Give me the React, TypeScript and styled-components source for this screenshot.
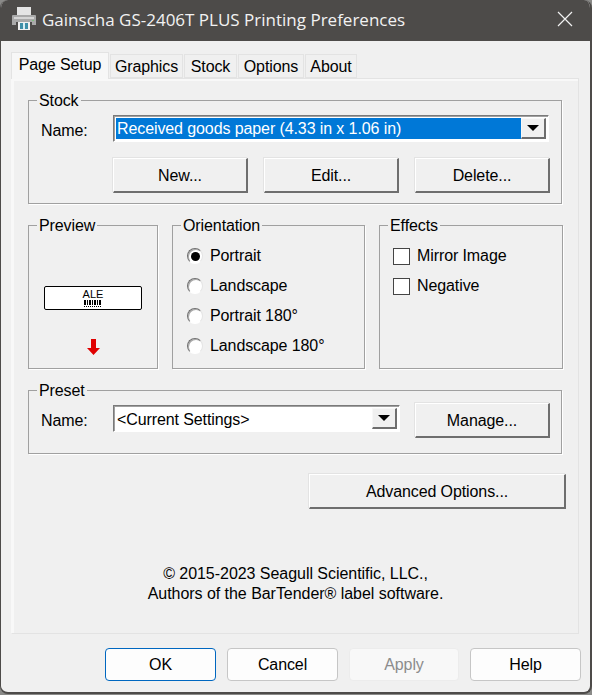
import React from 'react'
import styled, { createGlobalStyle } from 'styled-components'

const Global = createGlobalStyle`
  html, body {
    margin: 0;
    padding: 0;
    background: #8a8a88;
  }
  * {
    box-sizing: border-box;
  }
`
const Dialog = styled.div`
  width: 592px;
  height: 694px;
  display: flex;
  flex-direction: column;
  background: #f0f0f0;
  border-radius: 8px;
  overflow: hidden;
  border-style: solid;
  border-color: #4d4b49;
  border-width: 0 2px 2px 1px;
  font-family: "Liberation Sans", Arial, sans-serif;
  font-size: 16px;
  letter-spacing: -0.1px;
  color: #000;
`
const TitleBar = styled.div`
  height: 41px;
  flex-shrink: 0;
  display: flex;
  align-items: center;
  padding: 0 17px 0 11px;
  background: #4d4b49;
  color: #f2f2f2;
  letter-spacing: 0;
`
const Title = styled.div`
  flex: 1;
  margin: 0 0 3px 6px;
  font-family: "Open Sans", "Noto Sans", sans-serif;
  font-size: 17px;
  white-space: nowrap;
`
const PrinterIcon = styled.svg`
  display: block;
  margin-bottom: 5px;
`
const CloseIcon = styled.svg`
  display: block;
  margin-bottom: 4px;
`
const Body = styled.div`
  flex: 1;
  padding: 11px 11px 0 10px;
`
const TabRow = styled.div`
  display: flex;
  align-items: flex-end;
  height: 26px;
  position: relative;
  z-index: 1;
`
const Tab = styled.div<{ $active?: boolean; $w: number }>`
  width: ${p => p.$w}px;
  height: ${p => (p.$active ? 27 : 24)}px;
  margin-right: 1px;
  margin-bottom: ${p => (p.$active ? -1 : 0)}px;
  padding-top: 3px;
  text-align: center;
  background: ${p => (p.$active ? '#f7f7f7' : '#f0f0f0')};
  border: 1px solid #e3e3e3;
  border-bottom: ${p => (p.$active ? 0 : '1px solid #e3e3e3')};
  white-space: nowrap;
`
const TabPanel = styled.div`
  height: 556px;
  border: 1px solid #e3e3e3;
  border-left-color: #f8f8f8;
  padding: 21px 16px 0 16px;
  box-shadow: inset 2px 2px 0 #f8f8f8;
`
const Group = styled.div<{ $w?: number; $h: number }>`
  position: relative;
  height: ${p => p.$h}px;
  width: ${p => (p.$w ? `${p.$w}px` : 'auto')};
  flex-shrink: 0;
  outline: 1px solid #a0a0a0;
  outline-offset: -1px;
  box-shadow: 1px 1px 0 #fff;
`
const Legend = styled.div`
  position: absolute;
  top: -8px;
  left: 9px;
  padding: 0 2px;
  line-height: 18px;
  background: #f0f0f0;
`
const NameRow = styled.div`
  display: flex;
  align-items: flex-start;
  padding-left: 13px;
`
const NameLabel = styled.div`
  width: 72px;
  padding-top: 7px;
`
const Combo = styled.div<{ $w: number }>`
  width: ${p => p.$w}px;
  height: 27px;
  display: flex;
  padding: 2px;
  background: #fff;
  border: 1px solid;
  border-color: #7a7a7a #fff #fff #7a7a7a;
  box-shadow: inset 1px 1px 0 #a0a0a0;
`
const ComboValue = styled.div<{ $selected?: boolean }>`
  flex: 1;
  padding: ${p => (p.$selected ? '0 0 0 1px' : '1px 0 0 1px')};
  line-height: 21px;
  white-space: nowrap;
  background: ${p => (p.$selected ? '#0078d7' : '#fff')};
  color: ${p => (p.$selected ? '#fff' : '#000')};
`
const ComboArrow = styled.div`
  width: 25px;
  display: flex;
  align-items: center;
  justify-content: center;
  background: #f0f0f0;
  border-style: solid;
  border-width: 1px 2px 2px 1px;
  border-color: #f8f8f8 #6e6e6e #6e6e6e #f8f8f8;
  &::after {
    content: '';
    border-style: solid;
    border-width: 6px 6px 0;
    border-color: #000 transparent transparent;
  }
`
const ClassicButton = styled.div<{ $w?: number }>`
  width: ${p => p.$w ?? 135}px;
  height: 35px;
  display: flex;
  align-items: center;
  justify-content: center;
  padding-top: 1px;
  background: #f0f0f0;
  border-style: solid;
  border-color: #fff #6e6e6e #6e6e6e #fff;
  border-width: 1px 2px 2px 1px;
  box-shadow: -1px -1px 0 #e3e3e3;
`
const ButtonRow = styled.div`
  display: flex;
  gap: 16px;
  margin: 16px 0 0 85px;
`
const StockBody = styled.div`
  padding-top: 15px;
`
const MiddleRow = styled.div`
  display: flex;
  gap: 14px;
  margin-top: 21px;
`
const PreviewBody = styled.div`
  display: flex;
  flex-direction: column;
  align-items: center;
  padding-top: 61px;
`
const Label = styled.div`
  width: 98px;
  height: 24px;
  display: flex;
  flex-direction: column;
  align-items: center;
  background: #fff;
  border: 1px solid #000;
  border-radius: 2px;
  padding-top: 2px;
`
const LabelText = styled.div`
  font-size: 11px;
  line-height: 10px;
  letter-spacing: 0;
`
const Barcode = styled.div`
  width: 18px;
  height: 7px;
  margin-top: 1px;
  background:
    repeating-linear-gradient(90deg, #000 0 1px, #fff 1px 2px) 0 6px / 100% 1px no-repeat,
    repeating-linear-gradient(90deg, #000 0 2px, #fff 2px 3px, #000 3px 4px, #fff 4px 5px) 0 0 / 100% 5px no-repeat;
`
const ArrowIcon = styled.svg`
  display: block;
  margin-top: 29px;
`
const OptionList = styled.div<{ $left: number }>`
  display: flex;
  flex-direction: column;
  gap: 10px;
  padding: 21px 0 0 ${p => p.$left}px;
`
const Option = styled.div`
  display: flex;
  align-items: center;
  gap: 7px;
  height: 20px;
  white-space: nowrap;
`
const Radio = styled.div<{ $checked?: boolean }>`
  width: 16px;
  height: 16px;
  display: flex;
  align-items: center;
  justify-content: center;
  border-radius: 50%;
  background: #fff;
  border: 1px solid;
  border-color: #707070 #e4e4e4 #fff #707070;
  box-shadow: inset 1px 1px 0 #a8a8a8;
  &::after {
    content: '';
    width: 9px;
    height: 9px;
    border-radius: 50%;
    background: ${p => (p.$checked ? '#000' : 'transparent')};
  }
`
const Check = styled.div`
  width: 17px;
  height: 17px;
  background: #fff;
  border: 1px solid #444;
`
const PresetRow = styled(NameRow)`
  gap: 15px;
`
const PresetName = styled.div`
  display: flex;
  align-items: flex-start;
  margin-top: 2px;
`
const PresetBody = styled.div`
  padding-top: 13px;
`
const PresetGap = styled.div`
  height: 21px;
`
const AdvancedRow = styled.div`
  display: flex;
  justify-content: flex-end;
  margin: 20px -4px 0 0;
`
const Copyright = styled.div`
  margin-top: 55px;
  text-align: center;
  line-height: 20px;
  padding-left: 1px;
  letter-spacing: -0.04px;
`
const Footer = styled.div`
  display: flex;
  justify-content: flex-end;
  gap: 11px;
  padding-top: 14px;
  margin-right: -2px;
`
const ModernButton = styled.div<{ $primary?: boolean; $disabled?: boolean }>`
  width: ${p => (p.$disabled ? 110 : 111)}px;
  height: 33px;
  display: flex;
  align-items: center;
  justify-content: center;
  border-radius: 4px;
  background: ${p => (p.$disabled ? '#f8f8f8' : '#fdfdfd')};
  border: 1px solid ${p => (p.$primary ? '#0067c0' : p.$disabled ? '#ececec' : '#c6c6c6')};
  color: ${p => (p.$disabled ? '#8c8c8c' : '#000')};
`

export default function App() {
  return (
    <Dialog>
      <Global />
      <TitleBar>
        <PrinterIcon width="24" height="23" viewBox="0 0 24 23">
          <rect x="5" y="0" width="14" height="9" fill="#e4e4e4" />
          <path d="M1 8h22a1 1 0 0 1 1 1v9h-4v-3H4v3H0V9a1 1 0 0 1 1-1z" fill="#a9a9a9" />
          <rect x="2" y="10" width="20" height="2" fill="#d4d4d4" />
          <rect x="20" y="13" width="2" height="1" fill="#7fc07f" />
          <rect x="6" y="15" width="12" height="8" fill="#f0f0f0" />
          <rect x="8" y="16" width="8" height="6" fill="#3f8fa8" />
          <rect x="11" y="16" width="2" height="6" fill="#d8eef4" />
        </PrinterIcon>
        <Title>Gainscha GS-2406T PLUS Printing Preferences</Title>
        <CloseIcon width="16" height="16" viewBox="0 0 16 16">
          <path d="M1 1l14 14M15 1L1 15" stroke="#f2f2f2" strokeWidth="1.2" fill="none" />
        </CloseIcon>
      </TitleBar>
      <Body>
        <TabRow>
          <Tab $active $w={98}>Page Setup</Tab>
          <Tab $w={73}>Graphics</Tab>
          <Tab $w={53}>Stock</Tab>
          <Tab $w={66}>Options</Tab>
          <Tab $w={52}>About</Tab>
        </TabRow>
        <TabPanel>
          <Group $h={104}>
            <Legend>Stock</Legend>
            <StockBody>
              <NameRow>
                <NameLabel>Name:</NameLabel>
                <Combo $w={436}>
                  <ComboValue $selected>Received goods paper (4.33 in x 1.06 in)</ComboValue>
                  <ComboArrow />
                </Combo>
              </NameRow>
              <ButtonRow>
                <ClassicButton>New...</ClassicButton>
                <ClassicButton>Edit...</ClassicButton>
                <ClassicButton>Delete...</ClassicButton>
              </ButtonRow>
            </StockBody>
          </Group>
          <MiddleRow>
            <Group $w={130} $h={144}>
              <Legend>Preview</Legend>
              <PreviewBody>
                <Label>
                  <LabelText>ALE</LabelText>
                  <Barcode />
                </Label>
                <ArrowIcon width="13" height="16" viewBox="0 0 13 16">
                  <path d="M4 0h5v9h4l-6.500 7L0 9h4z" fill="#e00000" />
                </ArrowIcon>
              </PreviewBody>
            </Group>
            <Group $w={193} $h={144}>
              <Legend>Orientation</Legend>
              <OptionList $left={15}>
                <Option><Radio $checked />Portrait</Option>
                <Option><Radio />Landscape</Option>
                <Option><Radio />Portrait 180°</Option>
                <Option><Radio />Landscape 180°</Option>
              </OptionList>
            </Group>
            <Group $w={184} $h={144}>
              <Legend>Effects</Legend>
              <OptionList $left={14}>
                <Option><Check />Mirror Image</Option>
                <Option><Check />Negative</Option>
              </OptionList>
            </Group>
          </MiddleRow>
          <PresetGap />
          <Group $h={64}>
            <Legend>Preset</Legend>
            <PresetBody>
              <PresetRow>
                <PresetName>
                  <NameLabel>Name:</NameLabel>
                  <Combo $w={287}>
                    <ComboValue>&lt;Current Settings&gt;</ComboValue>
                    <ComboArrow />
                  </Combo>
                </PresetName>
                <ClassicButton>Manage...</ClassicButton>
              </PresetRow>
            </PresetBody>
          </Group>
          <AdvancedRow>
            <ClassicButton $w={257}>Advanced Options...</ClassicButton>
          </AdvancedRow>
          <Copyright>
            © 2015-2023 Seagull Scientific, LLC.,
            <br />
            Authors of the BarTender® label software.
          </Copyright>
        </TabPanel>
        <Footer>
          <ModernButton $primary>OK</ModernButton>
          <ModernButton>Cancel</ModernButton>
          <ModernButton $disabled>Apply</ModernButton>
          <ModernButton>Help</ModernButton>
        </Footer>
      </Body>
    </Dialog>
  )
}
